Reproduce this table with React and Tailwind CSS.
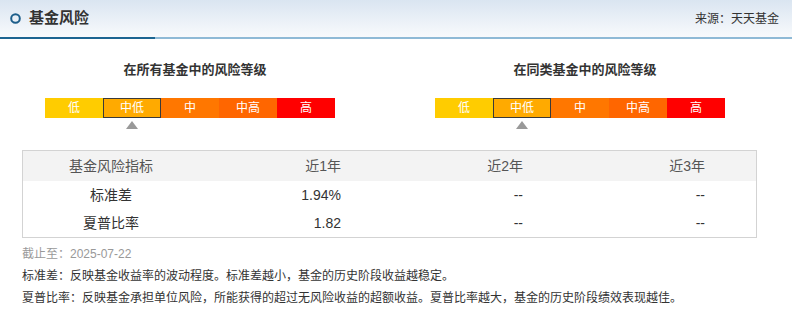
import React from "react";

const levels = [
  { label: "低", bg: "bg-[#ffcc00]" },
  { label: "中低", bg: "bg-[#ffaa00]" },
  { label: "中", bg: "bg-[#ff7700]" },
  { label: "中高", bg: "bg-[#ff6600]" },
  { label: "高", bg: "bg-[#ff0000]" },
];

const rows = [
  { name: "标准差", y1: "1.94%", y2: "--", y3: "--" },
  { name: "夏普比率", y1: "1.82", y2: "--", y3: "--" },
];

function RiskScale({ title, active }) {
  return (
    <div className="w-[390px]">
      <div className="h-5 leading-5 text-center text-[13px] font-bold text-[#333]">{title}</div>
      <div className="ml-[45px] mt-[18px] flex">
        {levels.map((lv, i) => (
          <div
            key={lv.label}
            className={`w-[58px] h-5 flex items-center justify-center text-xs text-white ${lv.bg} ${
              i === active ? "border border-[#3a3a3a]" : ""
            }`}
          >
            {lv.label}
          </div>
        ))}
      </div>
      <div className="ml-[45px] mt-[3px] flex">
        <div className="w-[58px] ml-[58px] flex justify-center">
          <div className="w-0 h-0 border-l-[6px] border-r-[6px] border-b-[8px] border-l-transparent border-r-transparent border-b-[#999]" />
        </div>
      </div>
    </div>
  );
}

export default function App() {
  return (
    <div className="w-[792px] h-[315px] bg-white overflow-hidden font-['Liberation_Sans','Noto_Sans_CJK_SC',sans-serif]">
      {/* header */}
      <div className="h-[37px] bg-gradient-to-b from-[#dae5f1] to-[#f8fafc] flex items-center justify-between pl-[10px] pr-[13px]">
        <div className="flex items-center">
          <svg width="11" height="11" viewBox="0 0 11 11">
            <circle cx="5.5" cy="5.5" r="4.3" fill="none" stroke="#1d5e8a" strokeWidth="2" />
          </svg>
          <span className="ml-[8px] text-[15px] font-bold text-[#333]">基金风险</span>
        </div>
        <span className="text-xs text-[#333]">来源：天天基金</span>
      </div>
      <div className="flex h-[2px]">
        <div className="w-[155px] bg-[#1c6591]" />
        <div className="flex-1 bg-[#8fbad6]" />
      </div>

      {/* risk scales */}
      <div className="flex mt-[21px]">
        <RiskScale title="在所有基金中的风险等级" active={1} />
        <RiskScale title="在同类基金中的风险等级" active={1} />
      </div>

      {/* table */}
      <div className="ml-[22px] mt-[21px] w-[735px] border border-[#d3d3d3]">
        <div className="grid grid-cols-[176px_182px_182px_193px] h-[30px] bg-[#f3f3f3] text-sm text-[#555] items-center">
          <div className="text-center">基金风险指标</div>
          <div className="text-right pr-[40px]">近1年</div>
          <div className="text-right pr-[40px]">近2年</div>
          <div className="text-right pr-[51px]">近3年</div>
        </div>
        {rows.map((r) => (
          <div key={r.name} className="grid grid-cols-[176px_182px_182px_193px] h-[28px] text-sm text-[#333] items-center">
            <div className="text-center">{r.name}</div>
            <div className="text-right pr-[40px]">{r.y1}</div>
            <div className="text-right pr-[40px]">{r.y2}</div>
            <div className="text-right pr-[51px]">{r.y3}</div>
          </div>
        ))}
      </div>

      {/* notes */}
      <div className="ml-[22px] mt-[5px] text-xs leading-[22px]">
        <div className="text-[#999]">截止至：2025-07-22</div>
        <div className="text-[#333]">标准差：反映基金收益率的波动程度。标准差越小，基金的历史阶段收益越稳定。</div>
        <div className="text-[#333]">夏普比率：反映基金承担单位风险，所能获得的超过无风险收益的超额收益。夏普比率越大，基金的历史阶段绩效表现越佳。</div>
      </div>
    </div>
  );
}
